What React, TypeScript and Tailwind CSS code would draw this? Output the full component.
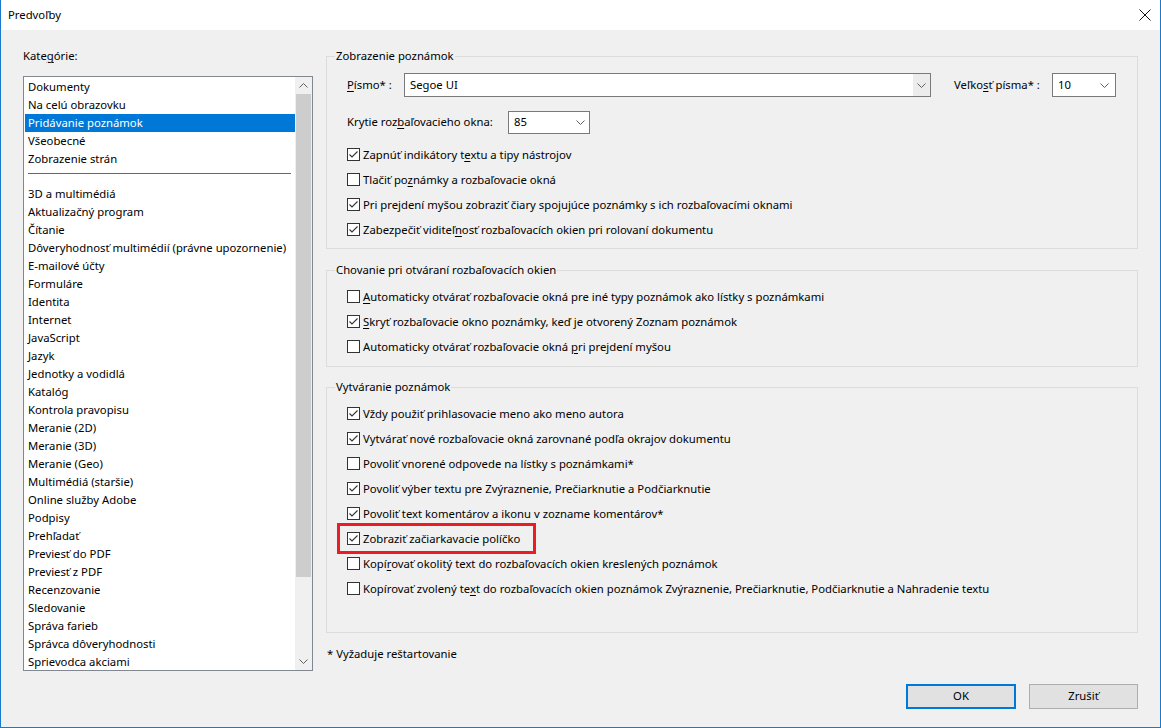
import React from "react";

function M({ t }: { t: string }) {
  const i = t.indexOf("&");
  if (i < 0) return <>{t}</>;
  return (
    <>
      {t.slice(0, i)}
      <span className="underline underline-offset-2 decoration-1">{t[i + 1]}</span>
      {t.slice(i + 2)}
    </>
  );
}

function Chevron({ up = false }: { up?: boolean }) {
  return (
    <svg width="9" height="5" viewBox="0 0 9 5" className="block">
      <polyline
        points={up ? "0.5,4.5 4.5,0.5 8.5,4.5" : "0.5,0.5 4.5,4.5 8.5,0.5"}
        fill="none"
        stroke="#606060"
        strokeWidth="1"
      />
    </svg>
  );
}

function Check({ on, label, highlight }: { on: boolean; label: string; highlight?: boolean }) {
  return (
    <div className="relative flex h-[25px] items-center pl-[20px]">
      <div className="flex h-[13px] w-[13px] shrink-0 items-center justify-center border border-[#333333] bg-white">
        {on && (
          <svg width="11" height="11" viewBox="0 0 11 11" className="block">
            <polyline points="1.5,5.5 4,8 9.5,2.5" fill="none" stroke="#333333" strokeWidth="1.1" />
          </svg>
        )}
      </div>
      <span className="ml-[3px] whitespace-nowrap leading-[18px]">
        <M t={label} />
      </span>
      {highlight && (
        <div className="pointer-events-none absolute left-[10px] top-[-3px] h-[31px] w-[199px] border-[3px] border-[#ea1c24]" />
      )}
    </div>
  );
}

function Group({ title, h, className = "", children }: { title: string; h: string; className?: string; children: React.ReactNode }) {
  return (
    <div className={`flex flex-col border border-[#dcdcdc] ${h} ${className}`}>
      <div className="-mt-[10px] ml-[8px] w-fit bg-[#f0f0f0] px-[1px] leading-[18px] whitespace-nowrap">{title}</div>
      {children}
    </div>
  );
}

const list1 = ["Dokumenty", "Na celú obrazovku", "Pridávanie poznámok", "Všeobecné", "Zobrazenie strán"];
const list2 = [
  "3D a multimédiá",
  "Aktualizačný program",
  "Čítanie",
  "Dôveryhodnosť multimédií (právne upozornenie)",
  "E-mailové účty",
  "Formuláre",
  "Identita",
  "Internet",
  "JavaScript",
  "Jazyk",
  "Jednotky a vodidlá",
  "Katalóg",
  "Kontrola pravopisu",
  "Meranie (2D)",
  "Meranie (3D)",
  "Meranie (Geo)",
  "Multimédiá (staršie)",
  "Online služby Adobe",
  "Podpisy",
  "Prehľadať",
  "Previesť do PDF",
  "Previesť z PDF",
  "Recenzovanie",
  "Sledovanie",
  "Správa farieb",
  "Správca dôveryhodnosti",
  "Sprievodca akciami",
];

function Item({ t, sel }: { t: string; sel?: boolean }) {
  return (
    <div
      className={`ml-[1px] h-[18px] shrink-0 whitespace-nowrap pl-[3px] leading-[18px] ${
        sel ? "bg-[#0078d7] text-white" : ""
      }`}
    >
      {t}
    </div>
  );
}

export default function App() {
  return (
    <div className="flex h-[728px] w-[1161px] flex-col overflow-hidden border-x border-b border-[#1979ca] bg-[#f0f0f0] font-['Noto_Sans',sans-serif] text-[11.3px] text-black">
      {/* title bar */}
      <div className="flex h-[30px] shrink-0 items-center justify-between bg-white">
        <span className="ml-[7px] leading-[18px]">Predvoľby</span>
        <svg width="12" height="12" viewBox="0 0 12 12" className="mr-[9px]">
          <path d="M0.5 0.5 L11.5 11.5 M11.5 0.5 L0.5 11.5" stroke="#111" strokeWidth="1" fill="none" />
        </svg>
      </div>

      <div className="flex flex-1">
        {/* left column */}
        <div className="ml-[22px] mt-[17px] flex w-[290px] flex-col">
          <div className="leading-[18px]">
            <M t="Kate&górie:" />
          </div>
          <div className="mt-[11px] flex h-[595px] border border-[#828790] bg-white">
            <div className="flex flex-1 flex-col overflow-hidden pt-[1px]">
              {list1.map((t, i) => (
                <Item key={t} t={t} sel={i === 2} />
              ))}
              <div className="h-[17px] shrink-0 pt-[5px] pl-[4px]">
                <div className="h-px w-[263px] bg-[#3f6fa5]" />
              </div>
              {list2.map((t) => (
                <Item key={t} t={t} />
              ))}
            </div>
            <div className="flex w-[17px] flex-col bg-[#f0f0f0]">
              <div className="flex h-[17px] items-center justify-center">
                <Chevron up />
              </div>
              <div className="mx-[1px] h-[483px] bg-[#cdcdcd]" />
              <div className="flex-1" />
              <div className="flex h-[17px] items-center justify-center">
                <Chevron />
              </div>
            </div>
          </div>
        </div>

        {/* right column */}
        <div className="ml-[13px] mt-[26px] flex w-[812px] flex-col">
          <Group title="Zobrazenie poznámok" h="h-[193px]">
            <div className="mt-[8px] flex h-[24px] items-center pl-[20px]">
              <span className="w-[57px] whitespace-nowrap">
                <M t="&Písmo* :" />
              </span>
              <div className="flex h-[24px] w-[527px] items-stretch border border-[#7a7a7a] bg-white">
                <span className="flex flex-1 items-center pl-[5px]">Segoe UI</span>
                <span className="flex w-[17px] items-center justify-center bg-[#ececec]">
                  <Chevron />
                </span>
              </div>
              <span className="ml-[23px] w-[98px] whitespace-nowrap">
                <M t="Veľko&sť písma* :" />
              </span>
              <div className="flex h-[24px] w-[64px] items-center justify-between border border-[#7a7a7a] bg-white pl-[5px] pr-[6px]">
                <span>10</span>
                <Chevron />
              </div>
            </div>
            <div className="mt-[14px] flex h-[23px] items-center pl-[20px]">
              <span className="w-[161px] whitespace-nowrap">
                <M t="Krytie roz&baľovacieho okna:" />
              </span>
              <div className="flex h-[23px] w-[82px] items-center justify-between border border-[#7a7a7a] bg-white pl-[5px] pr-[4px]">
                <span>85</span>
                <Chevron />
              </div>
            </div>
            <div className="mt-[8px] flex flex-col">
              <Check on label="Zapnúť indikátory t&extu a tipy nástrojov" />
              <Check on={false} label="Tlačiť po&známky a rozbaľovacie okná" />
              <Check on label="Pri prejdení myšou zobraziť čiary spojujúce poznámky s ich rozbaľovacími oknami" />
              <Check on label="Zabezpečiť viditeľ&nosť rozbaľovacích okien pri rolovaní dokumentu" />
            </div>
          </Group>

          <Group title="Chovanie pri otváraní rozbaľovacích okien" h="h-[97px]" className="mt-[21px]">
            <div className="mt-[5px] flex flex-col">
              <Check on={false} label="&Automaticky otvárať rozbaľovacie okná pre iné typy poznámok ako lístky s poznámkami" />
              <Check on label="&Skryť rozbaľovacie okno poznámky, keď je otvorený Zoznam poznámok" />
              <Check on={false} label="Automaticky otvárať rozbaľovacie okná &pri prejdení myšou" />
            </div>
          </Group>

          <Group title="Vytváranie poznámok" h="h-[246px]" className="mt-[20px]">
            <div className="mt-[5px] flex flex-col">
              <Check on label="Vždy použiť prihlasovacie meno ako meno autora" />
              <Check on label="Vytvárať nové rozbaľovacie okná zarovnané podľa okrajov dokumentu" />
              <Check on={false} label="Povoliť vnorené odpovede na lístky s poznámkami*" />
              <Check on label="Povoliť výber textu pre Zvýraznenie, Prečiarknutie a Podčiarknutie" />
              <Check on label="Povoliť text komentárov a ikonu v zozname komentárov*" />
              <Check on label="Zobraziť začiarkavacie políčko" highlight />
              <Check on={false} label="Kopí&rovať okolitý text do rozbaľovacích okien kreslených poznámok" />
              <Check on={false} label="Kopírovať zvolený te&xt do rozbaľovacích okien poznámok Zvýraznenie, Prečiarknutie, Podčiarknutie a Nahradenie textu" />
            </div>
          </Group>

          <div className="mt-[12px] ml-[1px] leading-[18px]">* Vyžaduje reštartovanie</div>

          <div className="mt-[21px] flex justify-end gap-[13px]">
            <button className="flex h-[25px] w-[110px] items-center justify-center border-2 border-[#0078d7] bg-[#e1e1e1]">
              OK
            </button>
            <button className="flex h-[25px] w-[109px] items-center justify-center border border-[#adadad] bg-[#e1e1e1]">
              Zrušiť
            </button>
          </div>
        </div>
      </div>
    </div>
  );
}
